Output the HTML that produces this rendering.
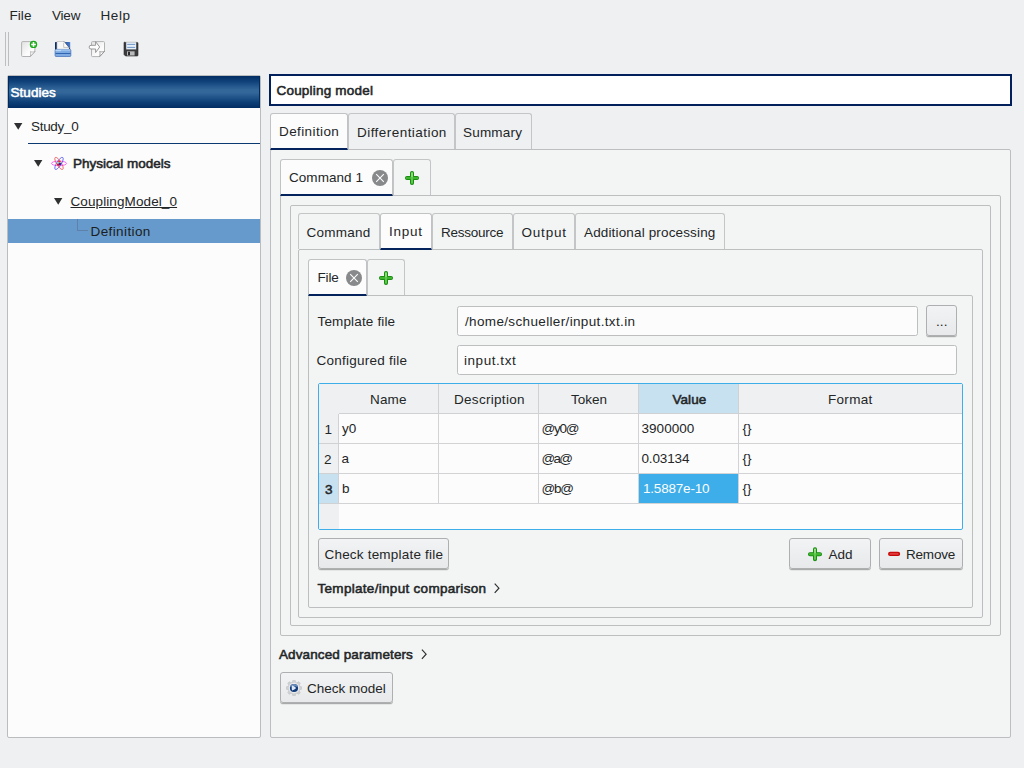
<!DOCTYPE html>
<html><head><meta charset="utf-8"><title>Coupling model</title>
<style>
*{box-sizing:border-box;margin:0;padding:0}
html,body{width:1024px;height:768px;overflow:hidden;background:#eff0f1}
body{position:relative;font-family:"Liberation Sans","DejaVu Sans",sans-serif;font-size:13.5px;color:#232627}
.a{position:absolute}
.t{position:absolute;white-space:pre;line-height:16px;height:16px}
.b{-webkit-text-stroke:.55px currentColor}
.tab{position:absolute;border:1px solid #c3c5c6;border-bottom:none;border-radius:3px 3px 0 0;background:transparent}
.tab.sel{background:#fcfcfc;border-color:#c0c2c3;border-bottom:2px solid #04235d}
.pane{position:absolute;border:1px solid #bcbec0;border-radius:2px;background:#f3f5f5}
.inp{position:absolute;border:1px solid #bcbec0;border-radius:2.5px;background:#fcfcfc}
.btn{position:absolute;border:1px solid #adafb1;border-radius:3px;background:linear-gradient(#f2f3f4,#e8e9ea);box-shadow:0 1px 0 rgba(0,0,0,.26),0 2px 0 rgba(0,0,0,.06)}
.hc{position:absolute;top:384px;height:30px;background:#eff0f1;border-right:1px solid #cfd1d2;border-bottom:1px solid #cfd1d2}
.cell{position:absolute;height:30px;border-right:1px solid #d1d3d4;border-bottom:1px solid #d1d3d4}
</style></head><body>

<!-- toolbar -->
<div class="a" style="left:5px;top:32px;width:1px;height:34px;background:#bcbebf"></div>
<div class="a" style="left:8px;top:32px;width:1px;height:34px;background:#bcbebf"></div>
<svg class="a" style="left:20px;top:40px" width="18" height="18" viewBox="0 0 18 18"><defs><linearGradient id="pg" x1="0" y1="0" x2="1" y2="1"><stop offset="0" stop-color="#e2e2e2"/><stop offset=".6" stop-color="#fbfbfb"/><stop offset="1" stop-color="#ffffff"/></linearGradient></defs><path d="M2.600 1.600h11.300a1 1 0 0 1 1 1v8.900l-4.600 5h-7.700a1 1 0 0 1-1-1v-12.900a1 1 0 0 1 1-1z" fill="url(#pg)" stroke="#b2b2b2"/><path d="M14.900 11.500c-1.700.7-3.300.6-4.500.1.500 1.400.4 3-.1 4.900z" fill="#fdfdfd" stroke="#9c9c9c" stroke-width=".7"/><circle cx="13.500" cy="4.400" r="3.700" fill="#18a018"/><circle cx="13.500" cy="4.400" r="3" fill="#2cb428"/><path d="M11.200 4.400h4.600M13.500 2.100v4.600" stroke="#fff" stroke-width="1.500"/></svg>
<svg class="a" style="left:54px;top:40px" width="18" height="18" viewBox="0 0 18 18"><defs><linearGradient id="bf" x1="0" y1="0" x2="1" y2="0"><stop offset="0" stop-color="#0a2a63"/><stop offset=".5" stop-color="#1c4389"/><stop offset="1" stop-color="#4a7dd2"/></linearGradient></defs><rect x="1" y="2" width="15.200" height="9" rx=".6" fill="url(#bf)"/><path d="M3 1.500h7.200l5.500 7.300v2h-12.700z" fill="#f7f7f7" stroke="#b9b9b9" stroke-width=".7"/><path d="M10.200 1.700l5.600 7.300" stroke="#1a2a50" stroke-width="1"/><path d="M10.200 1.800l-.4 5.600 5.500 1.200z" fill="#fdfdfd"/><path d="M9.700 2.800v4.600h4.600" fill="none" stroke="#b5b5b5" stroke-width=".8"/><rect x="1.100" y="9.400" width="15.750" height="7.100" rx=".9" fill="#7eaae3" stroke="#3f6db3" stroke-width=".7"/><path d="M1.600 10h14.700" stroke="#b4d4f6" stroke-width="1"/><path d="M1.500 10.600h5.500" stroke="#b9d8f8" stroke-width="1.200"/><path d="M1.500 13.500h15" stroke="#2f65b0" stroke-width="1"/></svg>
<svg class="a" style="left:88px;top:40px" width="18" height="18" viewBox="0 0 18 18"><path d="M4.500 1.600h11a1 1 0 0 1 1 1v8.800l-4.800 5.200h-7.200a1 1 0 0 1-1-1v-13a1 1 0 0 1 1-1z" fill="url(#pg)" stroke="#b2b2b2"/><path d="M16.500 11.400c-1.800.7-3.500.6-4.800.1.500 1.500.4 3.200 0 5z" fill="#fdfdfd" stroke="#7a7a7a" stroke-width=".7"/><path d="M3 5.300h4.600v-3.600l4.100 5.300-4.100 5.500v-3.500h-4.600a1.700 1.700 0 0 1 0-3.700z" fill="#fdfdfd" stroke="#8e8e8e" stroke-width=".9"/></svg>
<svg class="a" style="left:123px;top:41px" width="16" height="16" viewBox="0 0 16 16"><path d="M1.800 1.400h12.400a.8.800 0 0 1 .8.800v12a.8.800 0 0 1-.8.800h-11.700l-1.500-1.500v-11.700a.8.800 0 0 1 .8-.8z" fill="#3b3b3d" stroke="#2a2a2c" stroke-width=".6"/><rect x="3.200" y="1.200" width="10" height="7.200" fill="#e6eef8"/><path d="M4.200 3.400h8M4.200 6.400h8" stroke="#6f96c9" stroke-width="1"/><rect x="4" y="10.300" width="7.600" height="4.200" fill="#b9babc"/><rect x="5" y="10.800" width="2" height="3.400" fill="#2a2a2c"/></svg>

<!-- left panel -->
<div class="a" style="left:7px;top:75px;width:254px;height:663px;border:1px solid #babcbe;border-radius:2px;background:#fcfcfc"></div>
<div class="a" style="left:8px;top:76px;width:252px;height:32px;border-left:1px solid #012a5e;border-right:1px solid #012a5e;background:linear-gradient(#012d63 0%,#0d3f77 15%,#33679a 43%,#33679a 52%,#0d3f77 82%,#012d63 100%)"></div>

<svg class="a" style="left:14px;top:123px" width="9" height="7"><path d="M0 0h8.400l-4.200 6.800z" fill="#2e3031"/></svg>
<div class="a" style="left:28px;top:143px;width:232px;height:1px;background:#0c3a70"></div>
<svg class="a" style="left:34px;top:160px" width="9" height="7"><path d="M0 0h8.400l-4.200 6.800z" fill="#2e3031"/></svg>
<svg class="a" style="left:50px;top:155px" width="18" height="17" viewBox="0 0 18 17"><g fill="none" stroke-width=".8"><ellipse cx="9" cy="8.400" rx="7.500" ry="2.300" stroke="#f545f5"/><ellipse cx="9" cy="8.400" rx="7" ry="2.300" stroke="#5555f5" transform="rotate(-58 9 8.400)"/><ellipse cx="9" cy="8.400" rx="7" ry="2.300" stroke="#f55555" transform="rotate(58 9 8.400)"/></g><circle cx="8.500" cy="9.300" r="1.500" fill="#d41818"/><circle cx="10.100" cy="8.700" r="1.300" fill="#1818c8"/><circle cx="9.300" cy="6.900" r="1.300" fill="#f03010"/><circle cx="8" cy="7.700" r="1" fill="#7fe0e8"/><circle cx="10.200" cy="7.500" r=".8" fill="#7fe0e8"/></svg>
<svg class="a" style="left:54px;top:198px" width="9" height="7"><path d="M0 0h8.400l-4.200 6.800z" fill="#2e3031"/></svg>

<div class="a" style="left:8px;top:219px;width:252px;height:24px;background:#6699cc"></div>
<div class="a" style="left:77px;top:219px;width:1px;height:12px;background:#5f80a8"></div>
<div class="a" style="left:77px;top:230px;width:11px;height:1px;background:#5f80a8"></div>

<!-- title -->
<div class="a" style="left:269px;top:74px;width:743px;height:32px;border:2px solid #02215c;background:#fff"></div>

<!-- main tabs -->
<div class="pane" style="left:270px;top:149px;width:741px;height:589px"></div>
<div class="tab" style="left:348px;top:113px;width:107px;height:36px"></div>
<div class="tab" style="left:455px;top:113px;width:77px;height:36px"></div>
<div class="tab sel" style="left:270px;top:113px;width:78px;height:37px"></div>

<!-- command tabs -->
<div class="pane" style="left:280px;top:195px;width:721px;height:441px"></div>
<div class="tab" style="left:393px;top:159px;width:38px;height:36px"></div>
<div class="tab sel" style="left:280px;top:159px;width:113px;height:37px"></div>
<svg class="a" style="left:372px;top:170px" width="16" height="16" viewBox="0 0 16 16"><circle cx="8" cy="8" r="8" fill="#88898b"/><path d="M4.200 4.200l7.600 7.600M11.800 4.200l-7.600 7.600" stroke="#fcfcfc" stroke-width="1.100"/></svg>
<svg class="a" style="left:404px;top:170px" width="16" height="16" viewBox="0 0 16 16"><path d="M8 3v10M3 8h10" stroke="#0f8408" stroke-width="4" stroke-linecap="round"/><path d="M8 3v10M3 8h10" stroke="#3fb52f" stroke-width="2.400" stroke-linecap="round"/><path d="M8 3v9.500" stroke="#7fd56a" stroke-width="1.100" stroke-linecap="round"/><path d="M8 3v3.500" stroke="#b2ea9f" stroke-width="1.100" stroke-linecap="round"/></svg>

<div class="pane" style="left:290px;top:205px;width:701px;height:421px"></div>

<!-- inner tabs -->
<div class="pane" style="left:298px;top:249px;width:685px;height:369px"></div>
<div class="tab" style="left:298px;top:213px;width:82px;height:36px"></div>
<div class="tab" style="left:432px;top:213px;width:81px;height:36px"></div>
<div class="tab" style="left:513px;top:213px;width:62px;height:36px"></div>
<div class="tab" style="left:575px;top:213px;width:150px;height:36px"></div>
<div class="tab sel" style="left:380px;top:213px;width:52px;height:37px"></div>

<!-- file tabs -->
<div class="pane" style="left:308px;top:295px;width:665px;height:313px"></div>
<div class="tab" style="left:367px;top:259px;width:38px;height:36px"></div>
<div class="tab sel" style="left:308px;top:259px;width:59px;height:37px"></div>
<svg class="a" style="left:346px;top:270px" width="16" height="16" viewBox="0 0 16 16"><circle cx="8" cy="8" r="8" fill="#88898b"/><path d="M4.200 4.200l7.600 7.600M11.800 4.200l-7.600 7.600" stroke="#fcfcfc" stroke-width="1.100"/></svg>
<svg class="a" style="left:378px;top:270px" width="16" height="16" viewBox="0 0 16 16"><path d="M8 3v10M3 8h10" stroke="#0f8408" stroke-width="4" stroke-linecap="round"/><path d="M8 3v10M3 8h10" stroke="#3fb52f" stroke-width="2.400" stroke-linecap="round"/><path d="M8 3v9.500" stroke="#7fd56a" stroke-width="1.100" stroke-linecap="round"/><path d="M8 3v3.500" stroke="#b2ea9f" stroke-width="1.100" stroke-linecap="round"/></svg>

<div class="inp" style="left:457px;top:306px;width:461px;height:30px"></div>
<div class="btn" style="left:926px;top:305px;width:31px;height:31px"></div>
<div class="inp" style="left:457px;top:345px;width:500px;height:30px"></div>

<!-- table -->
<div class="a" style="left:318px;top:383px;width:645px;height:147px;border:1px solid #3daee9;border-radius:2px;background:#fcfcfc"></div>
<div class="hc" style="left:319px;width:20px;border-right:none;border-bottom:none"></div>
<div class="hc" style="left:339px;width:100px"></div>
<div class="hc" style="left:439px;width:100px"></div>
<div class="hc" style="left:539px;width:100px"></div>
<div class="hc" style="left:639px;width:100px;background:#c8e1f0"></div>
<div class="hc" style="left:739px;width:223px;border-right:none"></div>

<div class="a" style="left:319px;top:414px;width:20px;height:115px;background:#eff0f1"></div>
<div class="a" style="left:319px;top:474px;width:20px;height:30px;background:#c8e1f0"></div>
<div class="a" style="left:338px;top:414px;width:1px;height:90px;background:#cfd1d2"></div>
<div class="a" style="left:319px;top:443px;width:20px;height:1px;background:#cfd1d2"></div>
<div class="a" style="left:319px;top:473px;width:20px;height:1px;background:#cfd1d2"></div>
<div class="a" style="left:319px;top:503px;width:20px;height:1px;background:#cfd1d2"></div>

<div class="cell" style="left:339px;top:414px;width:100px"></div><div class="cell" style="left:439px;top:414px;width:100px"></div><div class="cell" style="left:539px;top:414px;width:100px"></div><div class="cell" style="left:639px;top:414px;width:100px"></div><div class="cell" style="left:739px;top:414px;width:223px;border-right:none"></div>
<div class="cell" style="left:339px;top:444px;width:100px"></div><div class="cell" style="left:439px;top:444px;width:100px"></div><div class="cell" style="left:539px;top:444px;width:100px"></div><div class="cell" style="left:639px;top:444px;width:100px"></div><div class="cell" style="left:739px;top:444px;width:223px;border-right:none"></div>
<div class="cell" style="left:339px;top:474px;width:100px"></div><div class="cell" style="left:439px;top:474px;width:100px"></div><div class="cell" style="left:539px;top:474px;width:100px"></div><div class="cell" style="left:639px;top:474px;width:100px"></div><div class="cell" style="left:739px;top:474px;width:223px;border-right:none"></div>
<div class="a" style="left:639px;top:474px;width:99px;height:29px;background:#3daee9"></div>

<!-- buttons -->
<div class="btn" style="left:318px;top:538px;width:131px;height:31px"></div>
<div class="btn" style="left:789px;top:538px;width:82px;height:31px"></div>
<svg class="a" style="left:807px;top:546px" width="16" height="16" viewBox="0 0 16 16"><path d="M8 3.200v10M3 8.200h10" stroke="#0f8408" stroke-width="4" stroke-linecap="round"/><path d="M8 3.200v10M3 8.200h10" stroke="#3fb52f" stroke-width="2.400" stroke-linecap="round"/><path d="M8 3.200v9.500" stroke="#7fd56a" stroke-width="1.100" stroke-linecap="round"/><path d="M8 3.200v3.500" stroke="#b2ea9f" stroke-width="1.100" stroke-linecap="round"/></svg>
<div class="btn" style="left:879px;top:538px;width:84px;height:31px"></div>
<svg class="a" style="left:887px;top:550px" width="14" height="8" viewBox="0 0 14 8"><path d="M3.200 3.900h7.800" stroke="#bf0505" stroke-width="4.300" stroke-linecap="round"/><path d="M3.200 3.900h7.800" stroke="#d61414" stroke-width="2.800" stroke-linecap="round"/><path d="M3.400 3.900h7.400" stroke="#e66a6a" stroke-width=".8" stroke-linecap="round"/></svg>

<svg class="a" style="left:493px;top:583px" width="8" height="11"><path d="M1.700 .6l4.200 4.600-4.200 4.600" fill="none" stroke="#2e3031" stroke-width="1.200"/></svg>
<svg class="a" style="left:420px;top:649px" width="8" height="11"><path d="M1.900 .6l4.200 4.600-4.200 4.600" fill="none" stroke="#2e3031" stroke-width="1.200"/></svg>

<div class="btn" style="left:280px;top:672px;width:113px;height:31px"></div>
<svg class="a" style="left:286px;top:680px" width="16" height="16" viewBox="0 0 16 16"><g fill="#cfd0d2" stroke="#bfc0c2" stroke-width=".5"><circle cx="8" cy="8" r="6.100"/><rect x="6.500" y=".2" width="3" height="3" rx=".9"/><rect x="6.500" y="12.800" width="3" height="3" rx=".9"/><rect x=".2" y="6.500" width="3" height="3" rx=".9"/><rect x="12.800" y="6.500" width="3" height="3" rx=".9"/><g transform="rotate(45 8 8)"><rect x="6.500" y=".2" width="3" height="3" rx=".9"/><rect x="6.500" y="12.800" width="3" height="3" rx=".9"/><rect x=".2" y="6.500" width="3" height="3" rx=".9"/><rect x="12.800" y="6.500" width="3" height="3" rx=".9"/></g></g><circle cx="8" cy="8" r="5.700" fill="#dcddde"/><circle cx="8" cy="8" r="5" fill="#ededee"/><circle cx="8" cy="8" r="4.100" fill="#113a7a"/><path d="M4.100 7.200a4 4 0 0 1 7.800 0a6 3 0 0 0-7.800 0z" fill="#6a8dbd"/><path d="M6 5.600q-.6 2.400 0 4.800q2.700-.6 4.200-2.400q-1.500-1.800-4.200-2.400z" fill="#dde6f4"/></svg>

<div class="t" style="left:9.5px;top:8px;letter-spacing:0.05px">File</div>
<div class="t" style="left:52px;top:8px;letter-spacing:-0.2px">View</div>
<div class="t" style="left:100.5px;top:8px;letter-spacing:0.6px">Help</div>
<div class="t b" style="left:10.5px;top:85px;letter-spacing:0.05px;color:#fff">Studies</div>
<div class="t" style="left:31px;top:119px;letter-spacing:-0.3px">Study_0</div>
<div class="t b" style="left:73px;top:156px">Physical models</div>
<div class="t" style="left:70.5px;top:194px;letter-spacing:0.1px;text-decoration:underline">CouplingModel_0</div>
<div class="t" style="left:90.5px;top:224px;letter-spacing:0.4px;color:#1b1e20">Definition</div>
<div class="t b" style="left:276.5px;top:83px;letter-spacing:0.2px">Coupling model</div>
<div class="t" style="left:279px;top:124px;letter-spacing:0.4px">Definition</div>
<div class="t" style="left:357px;top:125px;letter-spacing:0.45px">Differentiation</div>
<div class="t" style="left:463px;top:125px;letter-spacing:0.2px">Summary</div>
<div class="t" style="left:289px;top:170px;letter-spacing:0.05px">Command 1</div>
<div class="t" style="left:306.5px;top:225px;letter-spacing:0.25px">Command</div>
<div class="t" style="left:389px;top:224px;letter-spacing:0.75px">Input</div>
<div class="t" style="left:441px;top:225px;letter-spacing:-0.25px">Ressource</div>
<div class="t" style="left:521.5px;top:225px;letter-spacing:0.8px">Output</div>
<div class="t" style="left:584px;top:225px;letter-spacing:0.15px">Additional processing</div>
<div class="t" style="left:317.5px;top:270px;letter-spacing:-0.15px">File</div>
<div class="t" style="left:317.5px;top:314px;letter-spacing:0.15px">Template file</div>
<div class="t" style="left:465px;top:314px;letter-spacing:0.35px">/home/schueller/input.txt.in</div>
<div class="t" style="left:936px;top:314px;letter-spacing:0.1px">...</div>
<div class="t" style="left:316.5px;top:353px;letter-spacing:0.25px">Configured file</div>
<div class="t" style="left:464px;top:353px;letter-spacing:0.55px">input.txt</div>
<div class="t" style="left:370px;top:392px;letter-spacing:0.15px">Name</div>
<div class="t" style="left:454px;top:392px;letter-spacing:0.3px">Description</div>
<div class="t" style="left:571px;top:392px">Token</div>
<div class="t b" style="left:672.5px;top:392px;letter-spacing:0.05px">Value</div>
<div class="t" style="left:828px;top:392px;letter-spacing:0.3px">Format</div>
<div class="t" style="left:324.5px;top:422px">1</div>
<div class="t" style="left:342px;top:421px">y0</div>
<div class="t" style="left:541.5px;top:421px;letter-spacing:-1.25px">@y0@</div>
<div class="t" style="left:641.5px;top:421px;letter-spacing:0.05px">3900000</div>
<div class="t" style="left:742.5px;top:421px">{}</div>
<div class="t" style="left:324px;top:452px">2</div>
<div class="t" style="left:341.5px;top:451px">a</div>
<div class="t" style="left:541.5px;top:451px;letter-spacing:-1.75px">@a@</div>
<div class="t" style="left:641.5px;top:451px;letter-spacing:-0.15px">0.03134</div>
<div class="t" style="left:742.5px;top:451px">{}</div>
<div class="t b" style="left:325px;top:482px">3</div>
<div class="t" style="left:342px;top:481px">b</div>
<div class="t" style="left:541.5px;top:481px;letter-spacing:-1.25px">@b@</div>
<div class="t" style="left:643px;top:481px;letter-spacing:-0.2px;color:#fcfcfc">1.5887e-10</div>
<div class="t" style="left:742.5px;top:481px">{}</div>
<div class="t" style="left:324.5px;top:547px;letter-spacing:0.2px">Check template file</div>
<div class="t" style="left:828.5px;top:547px;letter-spacing:0.05px">Add</div>
<div class="t" style="left:906px;top:547px;letter-spacing:-0.2px">Remove</div>
<div class="t b" style="left:317.5px;top:581px;letter-spacing:0.3px">Template/input comparison</div>
<div class="t b" style="left:279px;top:647px;letter-spacing:0.1px">Advanced parameters</div>
<div class="t" style="left:307px;top:681px">Check model</div>

</body></html>
